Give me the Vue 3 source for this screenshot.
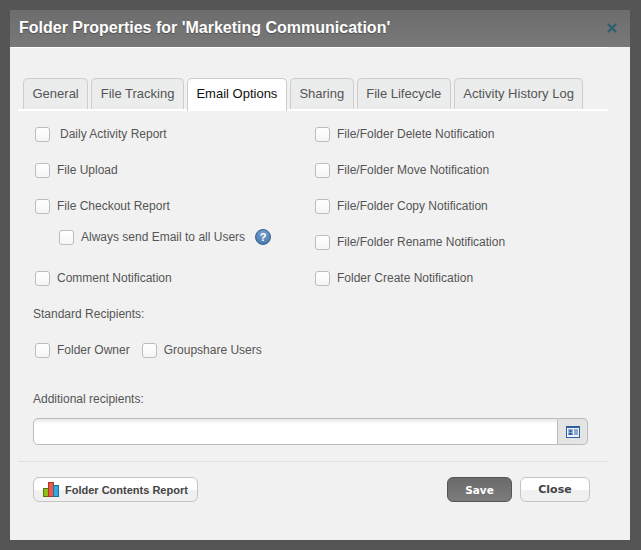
<script setup>
const tabs = ['General', 'File Tracking', 'Email Options', 'Sharing', 'File Lifecycle', 'Activity History Log']
const rightOptions = [
  'File/Folder Delete Notification',
  'File/Folder Move Notification',
  'File/Folder Copy Notification',
  'File/Folder Rename Notification',
  'Folder Create Notification'
]
</script>

<template>
  <div class="backdrop">
    <div class="dialog">
      <header class="titlebar">
        <h1>Folder Properties for 'Marketing Communication'</h1>
        <svg class="close-x" width="10" height="10" viewBox="0 0 10 10"><path d="M1 1l8 8M9 1l-8 8" stroke="#2c5f70" stroke-width="2.2" fill="none"/></svg>
      </header>
      <div class="body">
        <nav class="tabs">
          <div v-for="t in tabs" :key="t" class="tab" :class="{ active: t === 'Email Options' }">{{ t }}</div>
        </nav>
        <div class="options">
          <div class="col col-left">
            <label class="row daily"><span class="cb"></span><span>Daily Activity Report</span></label>
            <label class="row"><span class="cb"></span><span>File Upload</span></label>
            <label class="row"><span class="cb"></span><span>File Checkout Report</span></label>
            <label class="row sub">
              <span class="cb"></span><span>Always send Email to all Users</span>
              <span class="help">?</span>
            </label>
            <label class="row comment"><span class="cb"></span><span>Comment Notification</span></label>
          </div>
          <div class="col col-right">
            <label v-for="o in rightOptions" :key="o" class="row"><span class="cb"></span><span>{{ o }}</span></label>
          </div>
        </div>
        <div class="section-label standard">Standard Recipients:</div>
        <div class="recipients">
          <label class="row"><span class="cb"></span><span>Folder Owner</span></label>
          <label class="row"><span class="cb"></span><span>Groupshare Users</span></label>
        </div>
        <div class="section-label additional">Additional recipients:</div>
        <div class="input-group">
          <div class="input"></div>
          <div class="addon">
            <svg width="14" height="12" viewBox="0 0 14 12">
              <rect width="14" height="12" fill="#2f5f9e"/>
              <rect x="1" y="2" width="12" height="9" fill="#eef3fa"/>
              <rect x="2" y="3" width="5" height="6" fill="#9db8d8"/>
              <circle cx="4.5" cy="5" r="1.3" fill="#2f5f9e"/>
              <path d="M2.5 9c0-1.6 1-2.2 2-2.2s2 .6 2 2.2z" fill="#2f5f9e"/>
              <path d="M8 4h4M8 6h4M8 8h4" stroke="#2f5f9e" stroke-width="1"/>
            </svg>
          </div>
        </div>
        <div class="footer">
          <button class="btn report">
            <svg width="16" height="15" viewBox="0 0 16 15">
              <rect x="0.5" y="6.5" width="5" height="8" fill="#8cc01a" stroke="#55770f"/>
              <rect x="5.5" y="0.5" width="5" height="14" fill="#ee5a43" stroke="#a8392a"/>
              <rect x="10.5" y="3.5" width="5" height="11" fill="#35a7e0" stroke="#1f6f9c"/>
            </svg>
            <span>Folder Contents Report</span>
          </button>
          <div class="actions">
            <button class="btn save">Save</button>
            <button class="btn close">Close</button>
          </div>
        </div>
      </div>
    </div>
  </div>
</template>

<style>
html, body { margin: 0; padding: 0; }
</style>

<style scoped>
.backdrop {
  width: 641px;
  height: 550px;
  box-sizing: border-box;
  padding: 10px 11px 10px 10px;
  background: #555;
  font-family: "Liberation Sans", Arial, sans-serif;
  overflow: hidden;
}
.dialog {
  height: 530px;
  background: #f1f1f1;
  display: flex;
  flex-direction: column;
}
.titlebar {
  height: 37px;
  flex: none;
  box-sizing: border-box;
  padding: 0 13px 0 9px;
  display: flex;
  align-items: center;
  justify-content: space-between;
  background: linear-gradient(#6d6d6d, #787878);
}
.titlebar h1 {
  margin: 0 0 1px;
  font-size: 16px;
  font-weight: bold;
  color: #fff;
  white-space: nowrap;
  text-shadow: 0 1px 1px rgba(0, 0, 0, .35);
}
.close-x { margin-bottom: 1px; }
.body {
  flex: 1;
  margin-right: 22px;
  border-top: 1px solid #fff;
  padding: 30px 0 0 8px;
  position: relative;
}
.tabs {
  display: flex;
  gap: 3px;
  height: 31px;
  padding-left: 5px;
  border-bottom: 2px solid #fff;
}
.tab {
  flex: none;
  box-sizing: border-box;
  height: 31px;
  padding: 0 8.5px;
  line-height: 30px;
  font-size: 13px;
  white-space: nowrap;
  color: #555;
  background: #ebecec;
  border: 1px solid #ccc;
  border-bottom: 0;
  border-radius: 5px 5px 0 0;
}
.tab.active {
  height: 33px;
  background: #fff;
  color: #111;
}
.options {
  display: grid;
  grid-template-columns: 280px 1fr;
  padding: 13px 0 0 17px;
}
.col { display: flex; flex-direction: column; }
.row {
  display: flex;
  align-items: center;
  height: 20px;
  font-size: 12px;
  white-space: nowrap;
  color: #555;
  margin-bottom: 16px;
}
.cb {
  box-sizing: border-box;
  width: 15px;
  height: 15px;
  flex: none;
  margin-right: 7px;
  background: linear-gradient(#fff, #f6f6f6);
  border: 1px solid #bdbdbd;
  border-radius: 3px;
}
.daily .cb { margin-right: 10px; }
.sub {
  margin: -5px 0 21px 24px;
  height: 20px;
}
.help {
  box-sizing: border-box;
  width: 16px;
  height: 16px;
  margin-left: 10px;
  border-radius: 50%;
  background: radial-gradient(circle at 50% 30%, #7fa5cf, #3a6ea5);
  border: 1px solid #35608f;
  color: #fff;
  font-size: 11px;
  font-weight: bold;
  line-height: 14px;
  text-align: center;
}
.section-label {
  font-size: 12px;
  color: #555;
  margin-left: 15px;
  height: 14px;
  line-height: 14px;
}
.standard { margin-top: 3px; }
.recipients {
  display: flex;
  gap: 12px;
  margin: 19px 0 0 17px;
}
.recipients .row { margin: 0; }
.additional { margin-top: 32px; }
.input-group {
  display: flex;
  margin: 12px 0 0 15px;
  width: 555px;
  height: 27px;
}
.input {
  flex: 1;
  box-sizing: border-box;
  background: linear-gradient(#e8e8e8, #fff 5px);
  border: 1px solid #bbb;
  border-radius: 5px 0 0 5px;
}
.addon {
  width: 30px;
  box-sizing: border-box;
  display: flex;
  align-items: center;
  justify-content: center;
  background: #e3e5e5;
  border: 1px solid #bbb;
  border-left: 0;
  border-radius: 0 5px 5px 0;
}
.footer {
  margin-top: 16px;
  border-top: 1px solid #e0e0e0;
  padding: 15px 18px 0 15px;
  display: flex;
  justify-content: space-between;
  align-items: flex-start;
}
.actions { display: flex; gap: 8px; }
.btn {
  box-sizing: border-box;
  height: 25px;
  padding: 0;
  font-family: "DejaVu Sans", Verdana, sans-serif;
  font-size: 11px;
  font-weight: bold;
  color: #444;
  border: 1px solid #c4c4c4;
  border-radius: 6px;
  background: linear-gradient(#fff 0, #fff 50%, #f0f0f0 50%, #f0f0f0 100%);
}
.report {
  width: 165px;
  display: flex;
  align-items: center;
  gap: 6px;
  padding-left: 9px;
  font-family: "Liberation Sans", Arial, sans-serif;
  white-space: nowrap;
}
.save {
  width: 65px;
  color: #fff;
  font-size: 10.5px;
  background: linear-gradient(#6a6a6a, #7c7c7c);
  border-color: #555;
}
.close { width: 70px; }
</style>
